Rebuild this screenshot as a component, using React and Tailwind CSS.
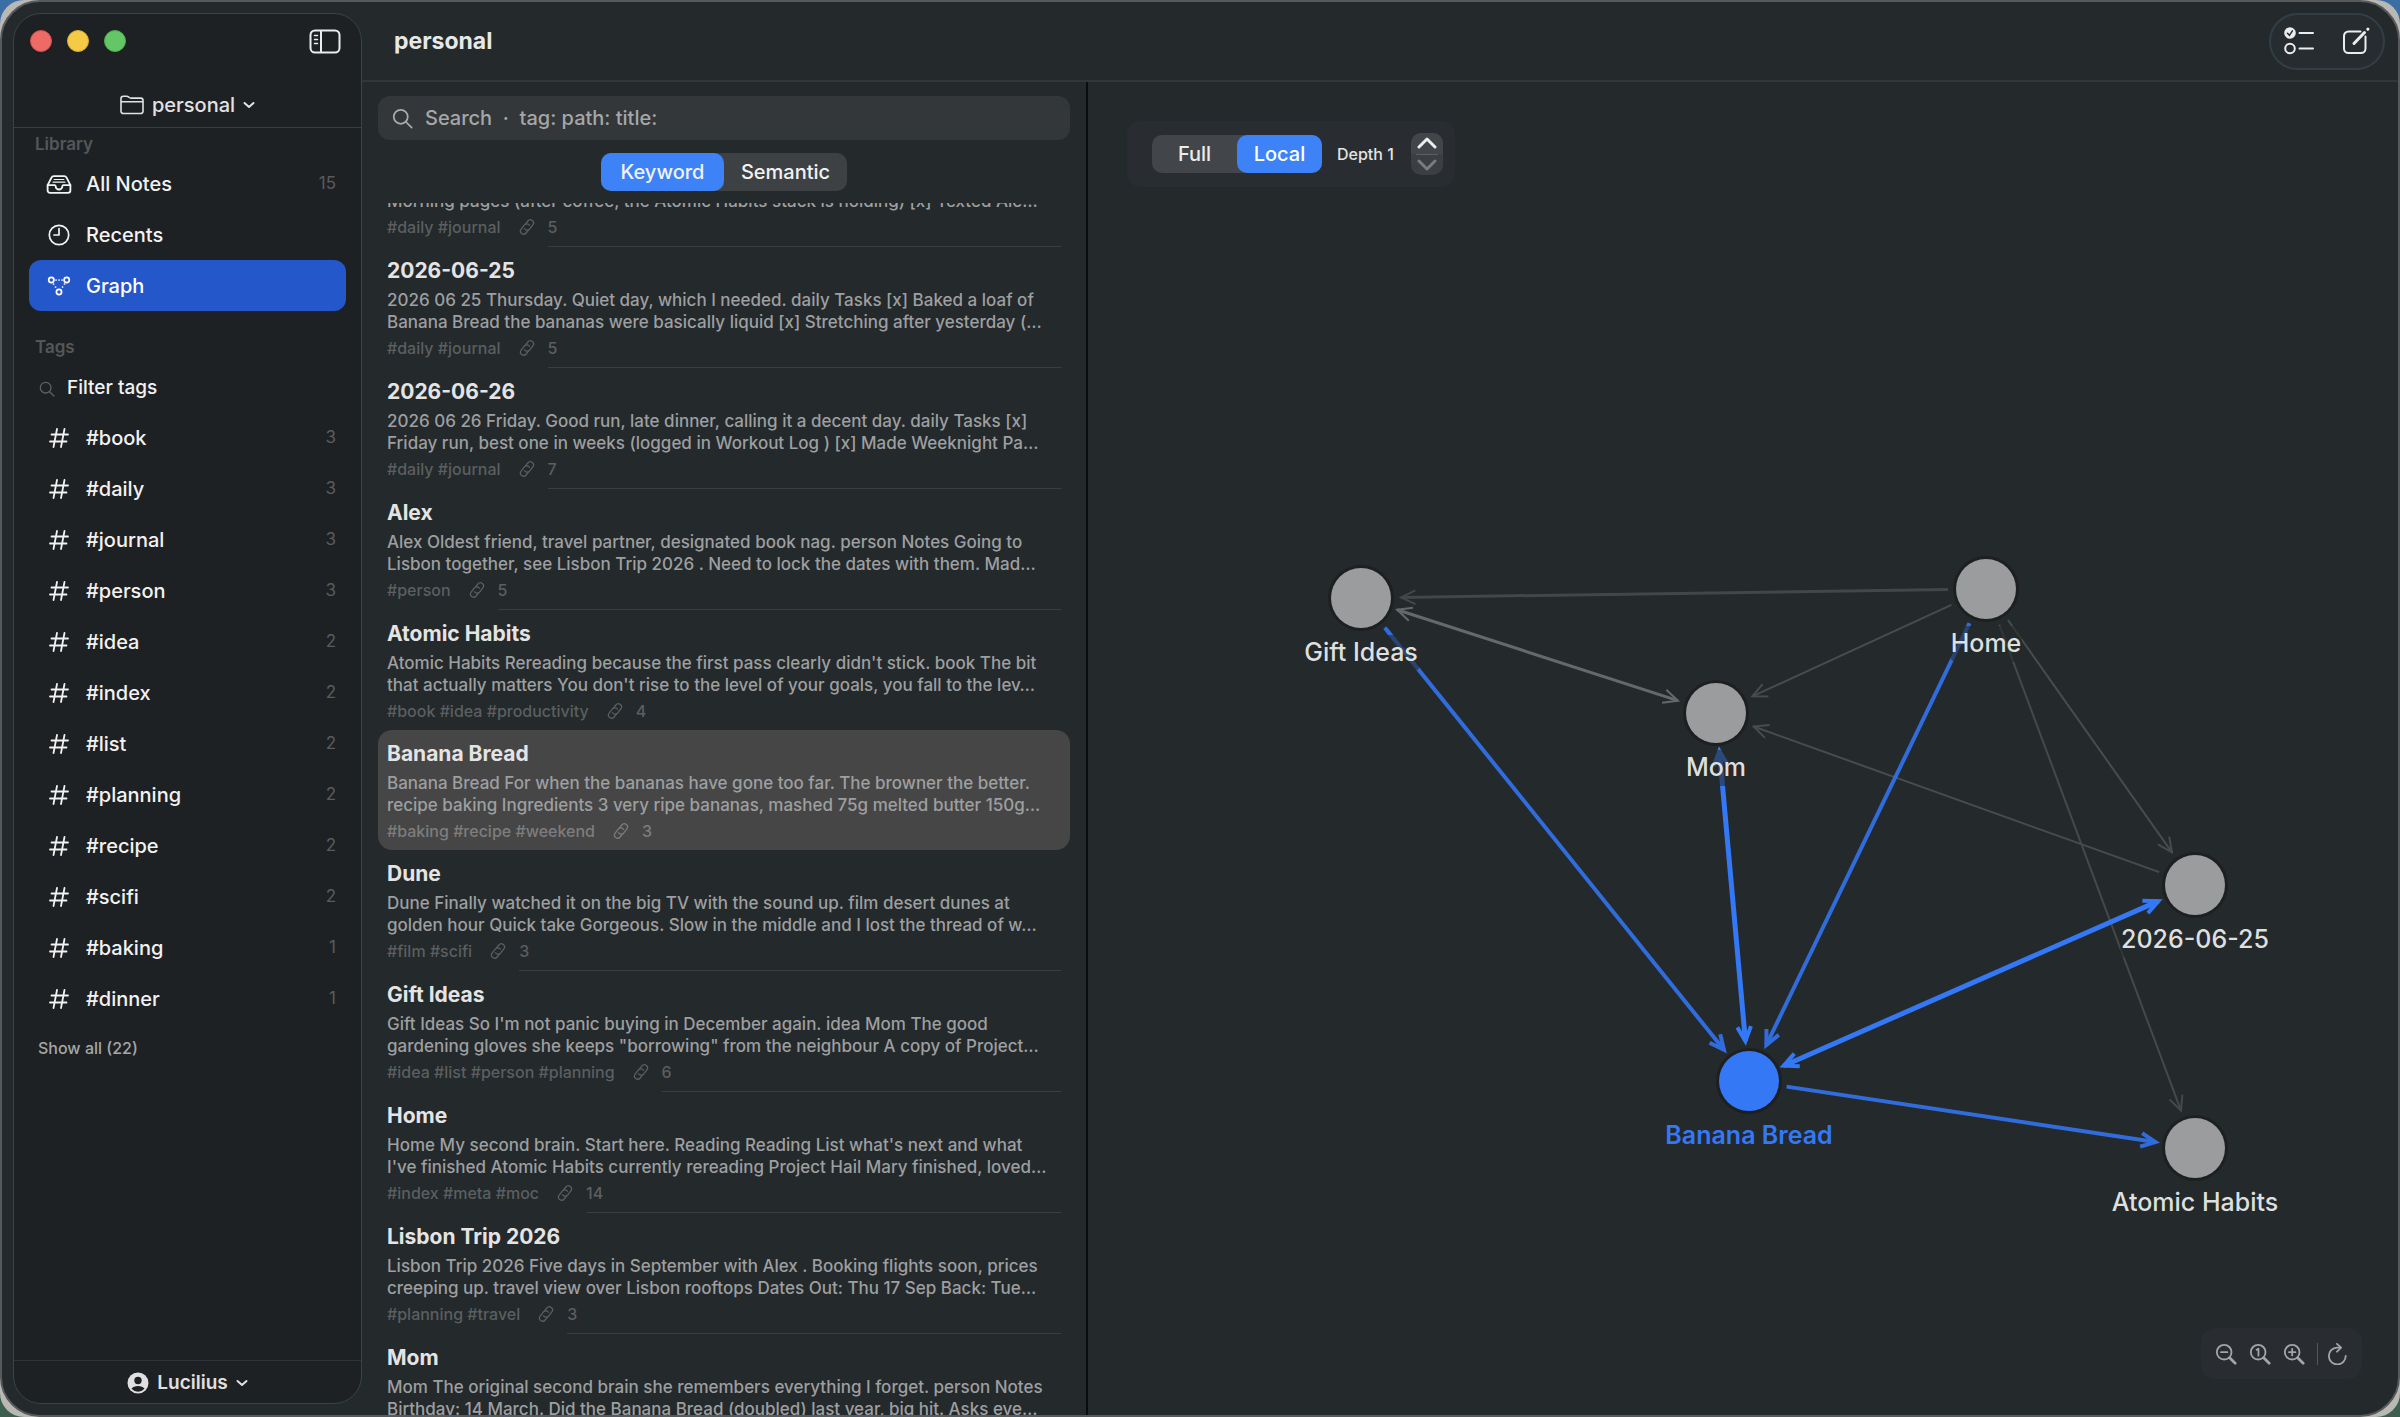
import React, { useState } from "react";

const tags = [
  ["#book", 3],
  ["#daily", 3],
  ["#journal", 3],
  ["#person", 3],
  ["#idea", 2],
  ["#index", 2],
  ["#list", 2],
  ["#planning", 2],
  ["#recipe", 2],
  ["#scifi", 2],
  ["#baking", 1],
  ["#dinner", 1],
];

const notes = [
  {
    lines: [
      "Morning pages (after coffee, the Atomic Habits stack is holding) [x] Texted Ale…",
    ],
    tags: "#daily #journal",
    links: 5,
  },
  {
    title: "2026-06-25",
    lines: [
      "2026 06 25 Thursday. Quiet day, which I needed. daily Tasks [x] Baked a loaf of",
      "Banana Bread the bananas were basically liquid [x] Stretching after yesterday (…",
    ],
    tags: "#daily #journal",
    links: 5,
  },
  {
    title: "2026-06-26",
    lines: [
      "2026 06 26 Friday. Good run, late dinner, calling it a decent day. daily Tasks [x]",
      "Friday run, best one in weeks (logged in Workout Log ) [x] Made Weeknight Pa…",
    ],
    tags: "#daily #journal",
    links: 7,
  },
  {
    title: "Alex",
    lines: [
      "Alex Oldest friend, travel partner, designated book nag. person Notes Going to",
      "Lisbon together, see Lisbon Trip 2026 . Need to lock the dates with them. Mad…",
    ],
    tags: "#person",
    links: 5,
  },
  {
    title: "Atomic Habits",
    lines: [
      "Atomic Habits Rereading because the first pass clearly didn't stick. book The bit",
      "that actually matters You don't rise to the level of your goals, you fall to the lev…",
    ],
    tags: "#book #idea #productivity",
    links: 4,
    plain: true,
  },
  {
    title: "Banana Bread",
    lines: [
      "Banana Bread For when the bananas have gone too far. The browner the better.",
      "recipe baking Ingredients 3 very ripe bananas, mashed 75g melted butter 150g…",
    ],
    tags: "#baking #recipe #weekend",
    links: 3,
    plain: true,
    selected: true,
  },
  {
    title: "Dune",
    lines: [
      "Dune Finally watched it on the big TV with the sound up. film desert dunes at",
      "golden hour Quick take Gorgeous. Slow in the middle and I lost the thread of w…",
    ],
    tags: "#film #scifi",
    links: 3,
  },
  {
    title: "Gift Ideas",
    lines: [
      "Gift Ideas So I'm not panic buying in December again. idea Mom The good",
      'gardening gloves she keeps "borrowing" from the neighbour A copy of Project…',
    ],
    tags: "#idea #list #person #planning",
    links: 6,
  },
  {
    title: "Home",
    lines: [
      "Home My second brain. Start here. Reading Reading List what's next and what",
      "I've finished Atomic Habits currently rereading Project Hail Mary finished, loved…",
    ],
    tags: "#index #meta #moc",
    links: 14,
  },
  {
    title: "Lisbon Trip 2026",
    lines: [
      "Lisbon Trip 2026 Five days in September with Alex . Booking flights soon, prices",
      "creeping up. travel view over Lisbon rooftops Dates Out: Thu 17 Sep Back: Tue…",
    ],
    tags: "#planning #travel",
    links: 3,
  },
  {
    title: "Mom",
    lines: [
      "Mom The original second brain she remembers everything I forget. person Notes",
      "Birthday: 14 March. Did the Banana Bread (doubled) last year, big hit. Asks eve…",
    ],
  },
];

const nodes = {
  gift: { x: 1361, y: 598, label: "Gift Ideas", w: 118 },
  home: { x: 1986, y: 589, label: "Home", w: 72 },
  mom: { x: 1716, y: 713, label: "Mom", w: 60 },
  day: { x: 2195, y: 885, label: "2026-06-25", w: 150 },
  banana: { x: 1749, y: 1081, label: "Banana Bread", w: 172, active: true },
  atomic: { x: 2195, y: 1148, label: "Atomic Habits", w: 168 },
};

const edges = [
  { from: "home", to: "gift", color: "#43474a", width: 3 },
  { from: "gift", to: "mom", color: "#66696b", width: 3, both: true },
  { from: "home", to: "mom", color: "#484c4e", width: 2 },
  { from: "day", to: "mom", color: "#484c4e", width: 2 },
  { from: "home", to: "day", color: "#484c4e", width: 2 },
  { from: "home", to: "atomic", color: "#46494b", width: 2 },
  { from: "gift", to: "banana", color: "#316cdc", width: 4 },
  { from: "home", to: "banana", color: "#316cdc", width: 4 },
  { from: "banana", to: "atomic", color: "#316cdc", width: 4 },
  { from: "mom", to: "banana", color: "#3478f6", width: 5, both: true },
  { from: "banana", to: "day", color: "#3478f6", width: 5, both: true },
];

const Icon = ({ size = 24, className = "", children, ...rest }) => (
  <svg
    width={size}
    height={size}
    viewBox="0 0 24 24"
    fill="none"
    stroke="currentColor"
    strokeWidth="1.6"
    strokeLinecap="round"
    strokeLinejoin="round"
    className={`shrink-0 ${className}`}
    aria-hidden="true"
    {...rest}
  >
    {children}
  </svg>
);

const ChevronDown = () => (
  <Icon size={12} strokeWidth="4">
    <path d="M3 8l9 8 9-8" />
  </Icon>
);

const SearchIcon = ({ size, className }) => (
  <Icon size={size} className={className} strokeWidth="2">
    <circle cx="10" cy="10" r="8" />
    <path d="M16 16l6.5 6.5" />
  </Icon>
);

const LinkIcon = () => (
  <Icon size={18} strokeWidth="1.7">
    <g transform="rotate(-52 12 12)">
      <path d="M10 16H5a4.2 4.2 0 0 1 0-8.4h7a4.2 4.2 0 0 1 3.9 5.6" />
      <path d="M14 8h5a4.2 4.2 0 0 1 0 8.4h-7a4.2 4.2 0 0 1-3.9-5.6" />
    </g>
  </Icon>
);

const HashIcon = () => (
  <Icon size={24} strokeWidth="1.8">
    <path d="M10 3L6.5 21M17.5 3L14 21M4.5 8.5h16.500M3 15.5h16.500" />
  </Icon>
);

const TrayIcon = () => (
  <Icon size={26} strokeWidth="1.7">
    <path d="M1.5 13L5 6.200A2.500 2.500 0 0 1 7.200 4.800h9.600A2.500 2.500 0 0 1 19 6.200L22.500 13v5a2.200 2.200 0 0 1-2.200 2.200H3.700A2.200 2.200 0 0 1 1.500 18z" />
    <path d="M1.5 13H8c.6 0 .8.400.9 1a3.100 3.100 0 0 0 6.200 0c.1-.6.300-1 .9-1h6.500" />
    <path d="M7.5 7.800h9M6.500 10.300h11" strokeWidth="1" />
  </Icon>
);

const ClockIcon = () => (
  <Icon size={24} strokeWidth="1.7">
    <circle cx="12" cy="12" r="9.7" />
    <path d="M12 5.5V12H7" />
  </Icon>
);

const GraphIcon = () => (
  <Icon size={24} strokeWidth="1.7">
    <circle cx="4.3" cy="6" r="2.6" />
    <circle cx="19.7" cy="6" r="2.6" />
    <circle cx="12" cy="18" r="2.6" />
    <path d="M9 6h.1M12 6h.1M15 6h.1M6.500 10h.1M8.500 13h.1M17.500 10h.1M15.500 13h.1" />
  </Icon>
);

const Sidebar = () => (
  <aside className="m-[11px] mr-0 flex w-[349px] shrink-0 flex-col overflow-hidden rounded-[28px] border border-[#3c4346] bg-[#1e2123]">
    <div className="flex h-[54px] items-center gap-[15px] pl-4 pr-5">
      <button aria-label="Close" className="size-[22px] rounded-full border border-[#d9504e] bg-[#ee6a67]" />
      <button aria-label="Minimize" className="size-[22px] rounded-full border border-[#d9ae33] bg-[#f5cb45]" />
      <button aria-label="Zoom" className="size-[22px] rounded-full border border-[#4fae4c] bg-[#63c765]" />
      <button aria-label="Toggle sidebar" className="ml-auto text-[#ececec]">
        <svg width="32" height="25" viewBox="0 0 32 25" fill="none" stroke="currentColor" strokeWidth="2" strokeLinecap="round" aria-hidden="true">
          <rect x="1.5" y="1.5" width="29" height="22" rx="4.5" />
          <path d="M12 2v21" />
          <path d="M5.5 6.500h3M5.500 10.500h3M5.500 14.500h3" strokeWidth="1.5" />
        </svg>
      </button>
    </div>

    <button className="flex h-[60px] items-center justify-center gap-2 border-b border-[#393d3f] pt-[14px] text-xl font-medium text-[#e2e2e2]">
      <svg width="24" height="20" viewBox="0 0 24 20" fill="none" stroke="currentColor" strokeWidth="1.6" strokeLinejoin="round" aria-hidden="true">
        <path d="M1 15.500V3.500A2.300 2.300 0 0 1 3.300 1.200h3.400c.8 0 1.200.2 1.800.7l.7.600c.5.400.9.600 1.600.6h9.900A2.300 2.300 0 0 1 23 5.400v10.800a2.300 2.300 0 0 1-2.300 2.300H3.300A2.300 2.300 0 0 1 1 16.200z" />
        <path d="M1 6.800h22" />
      </svg>
      personal
      <ChevronDown />
    </button>

    <nav className="flex flex-col px-[15px] text-xl font-medium text-[#f2f2f2]">
      <h2 className="h-[30px] pl-[6px] pt-1 text-[17px] leading-6 font-semibold text-[#54575a]">Library</h2>
      <a href="#all" className="flex h-[51px] items-center pl-4 pr-[10px]">
        <span className="flex w-[28px] justify-center"><TrayIcon /></span>
        <span className="ml-[13px]">All Notes</span>
        <span className="ml-auto text-[17px] font-normal text-[#595c5e]">15</span>
      </a>
      <a href="#recents" className="flex h-[51px] items-center pl-4 pr-[10px]">
        <span className="flex w-[28px] justify-center"><ClockIcon /></span>
        <span className="ml-[13px]">Recents</span>
      </a>
      <a href="#graph" aria-current="page" className="flex h-[51px] items-center rounded-[12px] bg-[#2457c9] pl-4 pr-[10px] text-white">
        <span className="flex w-[28px] justify-center"><GraphIcon /></span>
        <span className="ml-[13px]">Graph</span>
      </a>

      <h2 className="mt-6 h-6 pl-[6px] text-[17px] leading-6 font-semibold text-[#54575a]">Tags</h2>
      <label className="mt-2 mb-[2px] flex h-[43px] items-center gap-3 pl-[10px]">
        <SearchIcon size={16} className="text-[#5d6062]" />
        <input
          type="text"
          aria-label="Filter tags"
          placeholder="Filter tags"
          className="w-full bg-transparent text-[19px] font-medium outline-none placeholder:text-[#f2f2f2]"
        />
      </label>
      {tags.map(([name, count]) => (
        <a key={name} href={name} className="flex h-[51px] items-center pl-4 pr-[10px]">
          <span className="flex w-[28px] justify-center"><HashIcon /></span>
          <span className="ml-[13px]">{name}</span>
          <span className="ml-auto text-[17px] font-normal text-[#595c5e]">{count}</span>
        </a>
      ))}
      <button className="mt-2 h-8 pl-[9px] text-left text-base font-medium text-[#a5a7a8]">Show all (22)</button>
    </nav>

    <button className="mt-auto flex h-[43px] items-center justify-center gap-2 border-t border-[#303436] pt-[2px] text-[19px] font-semibold text-[#e0e0e0]">
      <svg width="22" height="22" viewBox="0 0 22 22" aria-hidden="true">
        <circle cx="11" cy="11" r="10.5" fill="#e0e0e0" />
        <circle cx="11" cy="8.5" r="3.7" fill="#1e2123" />
        <path d="M4.5 16.800c1.200-2 3.600-2.800 6.500-2.800s5.300.8 6.500 2.800a8.700 8.700 0 0 1-13 0z" fill="#1e2123" />
      </svg>
      Lucilius
      <ChevronDown />
    </button>
  </aside>
);

const NoteRow = ({ note }) => (
  <li
    className={`px-[9px] ${note.selected ? "rounded-[14px] bg-[#464646]" : ""}`}
  >
    {note.title && (
      <h3 className="pt-3 text-[21px] leading-6 font-bold text-[#e4e4e4]">{note.title}</h3>
    )}
    <p className="mt-[6px] text-[17px] leading-[22px] font-medium text-[#9d9fa0]">
      {note.lines.map((line) => (
        <span key={line} className="block truncate">{line}</span>
      ))}
    </p>
    {note.tags && (
      <div className={`flex items-start text-base font-medium ${note.selected ? "text-[#7d7d7d]" : "text-[#5b5f61]"}`}>
        <span className="pt-[3px] leading-6">{note.tags}</span>
        <span className="ml-[17px] pt-[6px]"><LinkIcon /></span>
        <span className={`ml-3 grow pt-[3px] leading-6 ${note.plain ? "h-[34px]" : "h-[35px] border-b border-[#3a3e40]"}`}>
          {note.links}
        </span>
      </div>
    )}
  </li>
);

const NoteList = () => {
  const [mode, setMode] = useState("Keyword");

  return (
    <section className="flex w-[726px] shrink-0 flex-col border-r-2 border-[#0b0c0d] px-4 pt-[14px]">
      <label className="flex h-[44px] shrink-0 items-center gap-3 rounded-[12px] bg-[#33373a] px-[14px]">
        <SearchIcon size={21} className="text-[#a9abac]" />
        <input
          type="search"
          aria-label="Search"
          placeholder="Search  ·  tag: path: title:"
          className="w-full bg-transparent text-xl font-medium outline-none placeholder:whitespace-pre placeholder:text-[#a5a7a8]"
        />
      </label>
      <div className="mx-auto mt-[13px] flex h-[38px] shrink-0 rounded-[10px] bg-[#3e4143] text-xl font-medium text-[#f2f2f2]">
        {["Keyword", "Semantic"].map((m) => (
          <button
            key={m}
            aria-pressed={mode === m}
            onClick={() => setMode(m)}
            className={`w-[123px] rounded-[10px] ${mode === m ? "bg-[#3e82f8]" : ""}`}
          >
            {m}
          </button>
        ))}
      </div>
      <div className="mt-3 min-h-0 grow overflow-hidden">
        <ul className="-mt-[19px]">
          {notes.map((note) => (
            <NoteRow key={note.lines[0]} note={note} />
          ))}
        </ul>
      </div>
    </section>
  );
};

// Distance kept between a node's centre and the ends of its edges
const TAIL_GAP = 38;
const HEAD_GAP = 40;

const Edge = ({ from, to, color, width, both }) => {
  const a = nodes[from];
  const b = nodes[to];
  const angle = Math.atan2(b.y - a.y, b.x - a.x);
  const cos = Math.cos(angle);
  const sin = Math.sin(angle);
  const start = { x: a.x + cos * TAIL_GAP, y: a.y + sin * TAIL_GAP };
  const end = { x: b.x - cos * HEAD_GAP, y: b.y - sin * HEAD_GAP };

  const head = ({ x, y }, dir) => {
    const p = [dir + 2.7, dir - 2.7].map(
      (t) => `${x + Math.cos(t) * 16},${y + Math.sin(t) * 16}`
    );
    return `M${p[0]} L${x},${y} L${p[1]}`;
  };

  return (
    <g stroke={color} fill="none">
      <path d={`M${start.x},${start.y} L${end.x},${end.y}`} strokeWidth={width} />
      <path d={head(end, angle)} strokeWidth={width > 3 ? 4 : 2} />
      {both && (
        <path d={head(start, angle + Math.PI)} strokeWidth={width > 3 ? 4 : 2} />
      )}
    </g>
  );
};

const Graph = () => {
  const [scope, setScope] = useState("Local");
  const [depth, setDepth] = useState(1);

  return (
    <section className="relative min-w-0 grow">
      <svg className="absolute inset-0 size-full" viewBox="1088 82 1310 1333" role="img" aria-label="Local graph">
        {edges.map((e) => (
          <Edge key={e.from + e.to} {...e} />
        ))}
        {Object.values(nodes).map((n) => (
          <g key={n.label}>
            <circle cx={n.x} cy={n.y} r="33" fill="#1d1f20" />
            <circle cx={n.x} cy={n.y} r="30" fill={n.active ? "#3478f6" : "#9a9c9d"} />
            <rect x={n.x - n.w / 2} y={n.y + 37} width={n.w} height="36" rx="6" fill="#24292b" fillOpacity="0.6" />
            <text
              x={n.x}
              y={n.y + 63}
              textAnchor="middle"
              fontSize="25"
              fontWeight={n.active ? 600 : 500}
              fill={n.active ? "#3478f6" : "#dedfdf"}
            >
              {n.label}
            </text>
          </g>
        ))}
      </svg>

      <div className="absolute top-[39px] left-[39px] flex h-[66px] items-center rounded-[14px] bg-[#292d31] pr-3 pl-[25px]">
        <div className="flex h-[38px] rounded-[10px] bg-[#42464a] text-xl font-medium text-[#ececec]">
          {["Full", "Local"].map((s) => (
            <button
              key={s}
              aria-pressed={scope === s}
              onClick={() => setScope(s)}
              className={`w-[85px] rounded-[10px] ${scope === s ? "bg-[#3e82f8] text-white" : ""}`}
            >
              {s}
            </button>
          ))}
        </div>
        <span className="ml-[15px] w-[60px] text-base font-medium whitespace-nowrap text-[#e2e3e3]">Depth {depth}</span>
        <div className="ml-[14px] flex h-[42px] w-[32px] flex-col rounded-[10px] bg-[#3b3f43]">
          <button aria-label="Increase depth" onClick={() => setDepth(depth + 1)} className="flex grow items-center justify-center rounded-t-[10px] bg-[#42464a] text-[#ededed]">
            <svg width="20" height="12" viewBox="0 0 20 12" fill="none" stroke="currentColor" strokeWidth="3" strokeLinecap="round" strokeLinejoin="round" aria-hidden="true"><path d="M2 10l8-8 8 8" /></svg>
          </button>
          <span className="mx-[5px] h-px bg-[#5c6063]" />
          <button aria-label="Decrease depth" onClick={() => setDepth(Math.max(1, depth - 1))} className="flex grow items-center justify-center text-[#797d80]">
            <svg width="20" height="12" viewBox="0 0 20 12" fill="none" stroke="currentColor" strokeWidth="3" strokeLinecap="round" strokeLinejoin="round" aria-hidden="true"><path d="M2 2l8 8 8-8" /></svg>
          </button>
        </div>
      </div>

      <div className="absolute right-[36px] bottom-[36px] flex h-[51px] items-center rounded-[14px] bg-[#292d31] px-[14px] text-[#a3a5a7]">
        <div className="flex gap-3">
          <button aria-label="Zoom out">
            <Icon size={22} strokeWidth="2"><circle cx="10" cy="10" r="8" /><path d="M6.5 10h7" /><path d="M16 16l6 6" strokeWidth="3" /></Icon>
          </button>
          <button aria-label="Actual size">
            <Icon size={22} strokeWidth="2"><circle cx="10" cy="10" r="8" /><path d="M8.3 7.5l2-1.3v7.6" /><path d="M16 16l6 6" strokeWidth="3" /></Icon>
          </button>
          <button aria-label="Zoom in">
            <Icon size={22} strokeWidth="2"><circle cx="10" cy="10" r="8" /><path d="M6.5 10h7M10 6.5v7" /><path d="M16 16l6 6" strokeWidth="3" /></Icon>
          </button>
        </div>
        <span className="ml-3 h-[22px] w-px bg-[#54585b]" />
        <button aria-label="Reload" className="ml-2">
          <Icon size={22} strokeWidth="2"><path d="M15.5 5H12a9.200 9.200 0 1 0 9.500 9" /><path d="M12 1l4.500 4-4.500 4.500" /></Icon>
        </button>
      </div>
    </section>
  );
};

export default function App() {
  return (
    <div className="h-screen bg-linear-to-b from-[#3a6ea5] to-[#3d5f50] font-[Inter,sans-serif] antialiased">
      <div className="h-full rounded-[24px] bg-[#b9b8b4]">
        <div className="flex h-full overflow-hidden rounded-[40px] border-2 border-[#565a5c] bg-[#24292b]">
          <Sidebar />
          <main className="flex min-w-0 grow flex-col">
            <header className="flex h-[80px] shrink-0 items-center justify-between border-b-2 border-[#323639] pr-[13px] pl-[32px]">
              <h1 className="pt-px text-[23px] font-bold text-[#e8e8e8]">personal</h1>
              <div className="flex h-[57px] items-center gap-[28px] rounded-full border-2 border-[#333e44] bg-[#272c30] px-[13px] text-[#ececec]">
                <button aria-label="Select notes">
                  <svg width="30" height="28" viewBox="0 0 30 28" fill="none" stroke="currentColor" strokeWidth="2" strokeLinecap="round" aria-hidden="true">
                    <circle cx="6" cy="6" r="5.8" fill="currentColor" stroke="none" />
                    <path d="M3.5 6.3l1.9 2 3-4.5" stroke="#272c30" strokeWidth="1.5" />
                    <circle cx="6" cy="21.5" r="4.8" />
                    <path d="M15.5 6h13.500M15.500 21.500h13.500" />
                  </svg>
                </button>
                <button aria-label="New note">
                  <svg width="28" height="28" viewBox="0 0 28 28" fill="none" stroke="currentColor" strokeWidth="2" strokeLinecap="round" strokeLinejoin="round" aria-hidden="true">
                    <path d="M18.500 4.500H6.500a4.500 4.500 0 0 0-4.500 4.500v12.500A4.500 4.500 0 0 0 6.500 26h12.500a4.500 4.500 0 0 0 4.500-4.500V9.500" />
                    <path d="M12 16.500L22.500 5.500" strokeWidth="3" />
                    <path d="M25.800 2.200l.1-.1" strokeWidth="3" />
                  </svg>
                </button>
              </div>
            </header>
            <div className="flex min-h-0 grow">
              <NoteList />
              <Graph />
            </div>
          </main>
        </div>
      </div>
    </div>
  );
}
